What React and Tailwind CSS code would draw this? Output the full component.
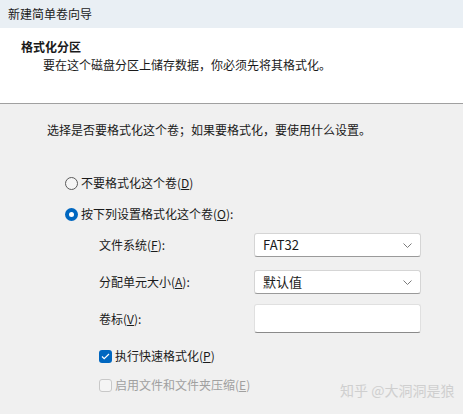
import React from "react";

const font = { fontFamily: '"Noto Sans CJK SC", "Noto Sans", sans-serif' };

const Chevron = () => (
  <svg width="9" height="5" viewBox="0 0 9 5" fill="none" className="shrink-0">
    <path d="M0.5 0.5l4 4 4-4" stroke="#7a7a7a" strokeWidth="1" />
  </svg>
);

const Select = ({ value }) => (
  <div className="flex h-[24px] w-[167px] items-center justify-between rounded-[3px] border border-[#d5d5d5] border-b-[#9a9a9a] bg-white pl-[8px] pr-[8px] text-[13px] text-[#1a1a1a]">
    <span>{value}</span>
    <Chevron />
  </div>
);

const Row = ({ label, children, className }) => (
  <div className={`flex items-center ${className || ""}`}>
    <span className="w-[155px] text-[12px] text-[#1a1a1a]">{label}</span>
    {children}
  </div>
);

export default function App() {
  return (
    <div className="relative h-[414px] w-[463px] overflow-hidden bg-[#f0f0f0]" style={font}>
      <div className="flex h-[28px] items-center bg-[#e9eff4] pl-[8px] text-[12px] text-[#1a1a1a]">
        新建简单卷向导
      </div>
      <div className="h-[76px] border-b border-[#a0a0a0] bg-white pl-[21px] pt-[10px]">
        <div className="text-[12px] font-bold leading-[18px] text-[#1a1a1a]">格式化分区</div>
        <div className="pl-[22px] text-[12px] leading-[18px] text-[#1a1a1a]">
          要在这个磁盘分区上储存数据，你必须先将其格式化。
        </div>
      </div>

      <div className="pl-[47px] pt-[17px] text-[12px] leading-[18px] text-[#1a1a1a]">
        选择是否要格式化这个卷；如果要格式化，要使用什么设置。
      </div>

      <div className="flex flex-col gap-[13px] pl-[65px] pt-[35px] text-[12px] leading-[18px] text-[#1a1a1a]">
        <div className="flex items-center gap-[3px]">
          <span className="h-[13px] w-[13px] rounded-full border border-[#5a5a5a] bg-[#f5f5f5]" />
          <span>
            不要格式化这个卷(<span className="underline">D</span>)
          </span>
        </div>
        <div className="flex items-center gap-[3px]">
          <span className="flex h-[13px] w-[13px] items-center justify-center rounded-full bg-[#0067c0]">
            <span className="h-[5px] w-[5px] rounded-full bg-white" />
          </span>
          <span>
            按下列设置格式化这个卷(<span className="underline">O</span>):
          </span>
        </div>
      </div>

      <div className="flex flex-col pl-[99px] pt-[10px]">
        <Row label={<>文件系统(<span className="underline">F</span>):</>}>
          <Select value="FAT32" />
        </Row>
        <Row className="mt-[13px]" label={<>分配单元大小(<span className="underline">A</span>):</>}>
          <Select value="默认值" />
        </Row>
        <Row className="mt-[10px]" label={<>卷标(<span className="underline">V</span>):</>}>
          <div className="h-[29px] w-[167px] rounded-[3px] border border-[#e0e0e0] border-b-[#8a8a8a] bg-white" />
        </Row>
      </div>

      <div className="flex flex-col gap-[11px] pl-[99px] pt-[14px] text-[12px] leading-[18px]">
        <div className="flex items-center gap-[3px] text-[#1a1a1a]">
          <span className="flex h-[13px] w-[13px] items-center justify-center rounded-[3px] bg-[#0067c0]">
            <svg width="9" height="7" viewBox="0 0 9 7" fill="none">
              <path d="M1 3.5l2.2 2.2L8 1" stroke="white" strokeWidth="1.2" />
            </svg>
          </span>
          <span>
            执行快速格式化(<span className="underline">P</span>)
          </span>
        </div>
        <div className="flex items-center gap-[3px] text-[#a0a0a0]">
          <span className="h-[13px] w-[13px] rounded-[3px] border border-[#c8c8c8] bg-[#f5f5f5]" />
          <span>
            启用文件和文件夹压缩(<span className="underline">E</span>)
          </span>
        </div>
      </div>

      <div className="absolute left-[340px] top-[380px] text-[14px] text-[#cfcfcf]">知乎 @大洞洞是狼</div>
    </div>
  );
}
